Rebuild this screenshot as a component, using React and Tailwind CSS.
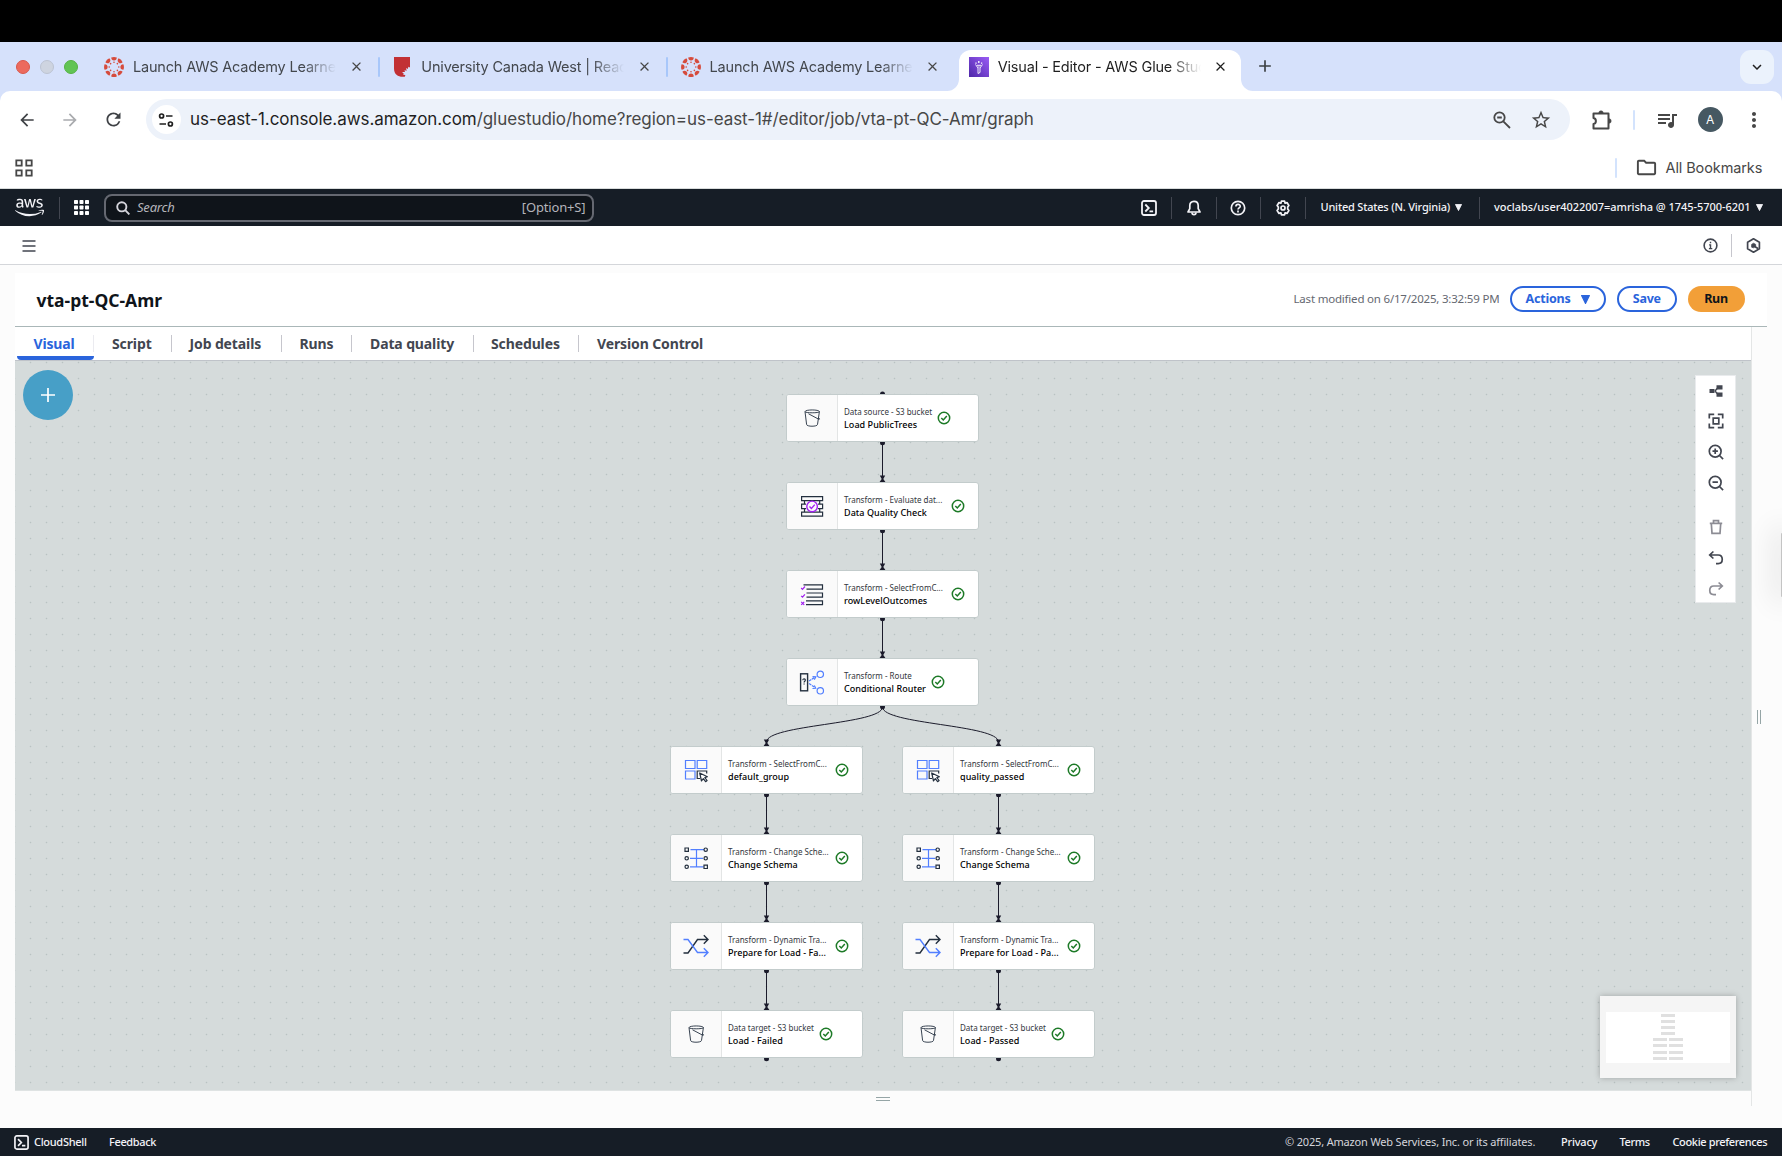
import { FaAws } from "react-icons/fa";
import {
  MdArrowBack,
  MdArrowForward,
  MdRefresh,
  MdStarOutline,
  MdQueueMusic,
  MdMoreVert,
  MdAdd,
  MdExpandMore,
  MdOutlineFolder,
  MdClose,
} from "react-icons/md";

/* ---------- browser chrome ---------- */

function CanvasFavicon() {
  const spokes = [0, 45, 90, 135, 180, 225, 270, 315];
  return (
    <svg viewBox="0 0 20 20" className="size-5 shrink-0">
      {spokes.map((a) => (
        <g key={a} transform={`rotate(${a} 10 10)`} fill="#d64b3c">
          <path d="M7.2 .6 Q10 -.5 12.8 .6 Q12.6 3.6 10 3.6 Q7.4 3.6 7.2 .6Z" />
          <circle cx="10" cy="5.2" r=".8" />
        </g>
      ))}
    </svg>
  );
}

function ShieldFavicon() {
  return (
    <svg viewBox="0 0 20 20" className="size-5 shrink-0">
      <path
        d="M2 0h16v10.500l-1.600-.8-.6 2.300-1.700-1 .5 3-2-1.100.3 2-2.900.2 1.700 1.400-.5 1.200 2.200.3-.6 1.700C7 20.500 2 18 2 11.500Z"
        fill="#c23034"
      />
    </svg>
  );
}

function GlueFavicon() {
  return (
    <svg viewBox="0 0 20 20" className="size-5 shrink-0">
      <defs>
        <linearGradient id="glue" x1="0" y1="1" x2="1" y2="0">
          <stop offset="0" stopColor="#4d27a8" />
          <stop offset="1" stopColor="#9a5cf5" />
        </linearGradient>
      </defs>
      <rect width="20" height="20" fill="url(#glue)" />
      <g fill="none" stroke="#fff" strokeWidth=".9">
        <path d="M6.500 7.500 9 11v5.500l2-1V11l2.500-3.500M8 8.300h4" />
        <path d="M7 6.800V5.400M9.800 6V4M12.600 6.800V5.400M9.900 9.500v1" strokeWidth="1.300" />
      </g>
    </svg>
  );
}

function Tab({ icon, title, active, divider }) {
  return (
    <div
      className={
        active
          ? "relative ml-[1.300px] flex h-[41px] w-[281.500px] items-center rounded-t-xl bg-white pl-[9.500px] before:absolute before:bottom-0 before:-left-3 before:size-3 before:rounded-br-xl before:shadow-[4px_4px_0_3px_#fff] after:absolute after:-right-3 after:bottom-0 after:size-3 after:rounded-bl-xl after:shadow-[-4px_4px_0_3px_#fff]"
          : "flex h-[41px] w-[288.300px] items-center pl-[11px]"
      }
    >
      <div className="flex -translate-y-1 items-center">
        {icon}
        <span
          className={
            "ml-[9px] w-[203px] overflow-hidden text-[14.500px] tracking-[-0.18px] whitespace-nowrap [mask-image:linear-gradient(to_right,#000_84%,transparent)] " +
            (active ? "text-[#1f1f1f]" : "text-[#43474d]")
          }
        >
          {title}
        </span>
        <MdClose className={"ml-[12.500px] size-[15px] " + (active ? "text-[#1f1f1f]" : "text-[#474747]")} />
        {divider && <span className="ml-[14.500px] h-5 w-[2px] rounded bg-[#a8c7fa]" />}
      </div>
    </div>
  );
}

function TabStrip() {
  return (
    <div className="flex h-[49px] items-end bg-[#d6e1fb]">
      <div className="mb-[17px] ml-[15.500px] flex w-[77.500px] gap-[9.700px]">
        <span className="size-[14.500px] rounded-full border border-[#d9574b] bg-[#ec6a5e]" />
        <span className="size-[14.500px] rounded-full border border-[#bcc3d2] bg-[#ced4e0]" />
        <span className="size-[14.500px] rounded-full border border-[#56b244] bg-[#61c454]" />
      </div>
      <Tab icon={<CanvasFavicon />} title="Launch AWS Academy Learner" divider />
      <Tab icon={<ShieldFavicon />} title="University Canada West | Reading" divider />
      <Tab icon={<CanvasFavicon />} title="Launch AWS Academy Learner" />
      <Tab icon={<GlueFavicon />} title="Visual - Editor - AWS Glue Studio" active />
      <MdAdd className="mb-[15px] ml-[14px] size-[20px] text-[#3c4043]" />
      <div className="mr-2 mb-[7px] ml-auto flex h-[34px] w-[34px] items-center justify-center rounded-[11px] bg-[#ebf2fc]">
        <MdExpandMore className="size-[18px] text-[#1f1f1f]" />
      </div>
    </div>
  );
}

function AddressBar() {
  return (
    <div className="bg-[#d6e1fb]">
      <div className="flex h-[57px] items-center rounded-t-[10px] bg-white text-[#474747]">
        <MdArrowBack className="ml-[17px] size-5 text-[#3f4246]" />
        <MdArrowForward className="ml-[23px] size-5 text-[#a9abae]" />
        <MdRefresh className="ml-[23px] size-[21px] text-[#3f4246]" />
        <div className="ml-[21.500px] flex h-[41.500px] w-[1424px] items-center rounded-full bg-[#edf2fa] pl-[6px]">
          <span className="flex size-[29px] items-center justify-center rounded-full bg-white">
            <svg viewBox="0 0 16 16" className="size-4" fill="none" stroke="#1f1f1f" strokeWidth="1.700">
              <circle cx="3.600" cy="4" r="2" />
              <path d="M8 4h6.500M1.500 12H8" />
              <circle cx="12.400" cy="12" r="2" />
            </svg>
          </span>
          <span className="ml-[9.500px] text-[17px] tracking-[-0.064px] whitespace-nowrap text-[#474747]">
            <span className="text-[#1f1f1f]">us-east-1.console.aws.amazon.com</span>
            /gluestudio/home?region=us-east-1#/editor/job/vta-pt-QC-Amr/graph
          </span>
          <svg viewBox="0 0 18 18" className="ml-auto size-[18px]" fill="none" stroke="#474747" strokeWidth="1.800">
            <circle cx="6.500" cy="6.500" r="5.200" />
            <path d="M10.300 10.300 17 17M4.200 6.500h4.600" />
          </svg>
          <MdStarOutline className="mr-[18px] ml-[19px] size-[22px]" />
        </div>
        <svg viewBox="0 0 22 22" className="ml-[21.500px] size-[22px]" fill="none" stroke="#474747" strokeWidth="2" strokeLinejoin="round">
          <path d="M2.500 4.500h15v15h-15v-4.400c3.200-.6 3.200-5.600 0-6.200Z" />
          <path d="M7.800 4a2.200 2.200 0 0 1 4.400 0ZM18 9.800a2.200 2.200 0 0 1 0 4.400Z" fill="#474747" strokeWidth=".6" />
        </svg>
        <span className="ml-[20px] h-5 w-[2px] rounded bg-[#d3e3fd]" />
        <MdQueueMusic className="ml-[20px] size-[24px]" />
        <span className="ml-[19px] flex size-[24.500px] items-center justify-center rounded-full bg-[#465862] text-[12px] text-white">A</span>
        <MdMoreVert className="ml-[19px] size-6" />
      </div>
    </div>
  );
}

function BookmarksBar() {
  return (
    <div className="flex h-[41px] items-center border-b border-[#d9dcdc] bg-white pb-[1px]">
      <svg viewBox="0 0 18 18" className="ml-[15px] size-[18px]" fill="none" stroke="#474747" strokeWidth="1.800">
        <path d="M1.300 1.300h5.400v5.400H1.300ZM11.300 1.300h5.400v5.400h-5.400ZM1.300 11.300h5.400v5.400H1.300ZM11.300 11.300h5.400v5.400h-5.400Z" />
      </svg>
      <div className="ml-auto flex items-center">
        <span className="h-5 w-[2px] rounded bg-[#d3e3fd]" />
        <MdOutlineFolder className="ml-[18px] size-[23px] text-[#474747]" />
        <span className="ml-[8px] w-[97px] text-[14.500px] tracking-[-0.1px] whitespace-nowrap text-[#474747]">All Bookmarks</span>
      </div>
      <span className="w-[19.500px]" />
    </div>
  );
}

/* ---------- AWS navigation ---------- */

function Divider({ className }) {
  return <span className={"h-[22px] w-px shrink-0 bg-[#424650] " + className} />;
}

function ShellIcon({ className }) {
  return (
    <svg viewBox="0 0 16 16" className={className} fill="none" stroke="currentColor" strokeWidth="1.800">
      <rect x="1" y="1" width="14" height="14" rx="2" />
      <path d="M4.300 4.500 7.800 8l-3.500 3.500M8.500 11.300h3.600" />
    </svg>
  );
}

function AwsHeader() {
  return (
    <div className="flex h-[37px] items-center bg-[#161d26] font-['Noto_Sans',sans-serif] text-[11px] font-medium text-[#f3f3f7]">
      <FaAws className="ml-[15px] size-[29px] shrink-0" />
      <Divider className="ml-[15px]" />
      <svg viewBox="0 0 15 15" className="ml-[14px] size-[15px]" fill="#fff">
        {[0, 5.5, 11].map((y) => [0, 5.5, 11].map((x) => <rect key={x + "-" + y} x={x} y={y} width="4" height="4" rx=".7" />))}
      </svg>
      <div className="ml-[15px] flex h-[28px] w-[490px] items-center rounded-lg border-2 border-[#656871] bg-[#0f141a] text-[13px] font-normal text-[#b4b4bb]">
        <svg viewBox="0 0 14 14" className="ml-[9.500px] size-[14px]" fill="none" stroke="#d5d5dc" strokeWidth="1.900">
          <circle cx="5.800" cy="5.800" r="4.600" />
          <path d="m9.200 9.200 4.200 4.200" />
        </svg>
        <span className="ml-[7.500px] tracking-[-0.2px] italic">Search</span>
        <span className="mr-[6.500px] ml-auto tracking-[-0.15px]">[Option+S]</span>
      </div>
      <ShellIcon className="ml-[546.500px] size-[16px]" />
      <Divider className="ml-[14px]" />
      <svg viewBox="0 0 16 16" className="ml-[14px] size-4" fill="none" stroke="currentColor" strokeWidth="1.700">
        <path d="M8 1.300c-3 0-4.200 2-4.200 4.300v3L2 12h12l-1.800-3.400v-3C12.200 3.300 11 1.300 8 1.300Z" strokeLinejoin="round" />
        <path d="M6 12.500c0 2.800 4 2.800 4 0" />
      </svg>
      <Divider className="ml-[14px]" />
      <svg viewBox="0 0 16 16" className="ml-[13.500px] size-4" fill="none" stroke="currentColor" strokeWidth="1.700">
        <circle cx="8" cy="8" r="6.700" />
        <path d="M5.900 6.600C5.900 3.600 10.300 3.800 10.200 6.400 10.100 7.900 8 7.900 8 9.600M8 10.600v1.800" />
      </svg>
      <Divider className="ml-[14px]" />
      <svg viewBox="0 0 16 16" className="ml-[14px] size-4" fill="none" stroke="currentColor" strokeWidth="1.700" strokeLinejoin="round">
        <path d="M6.400 1.200h3.200l.5 2 1.900-.6 1.900 2.800L12.700 7v2l1.200 1.600-1.900 2.800-1.900-.6-.5 2H6.400l-.5-2-1.900.6-1.900-2.800L3.300 9V7L2.100 5.400 4 2.600l1.900.6Z" />
        <circle cx="8" cy="8" r="2" />
      </svg>
      <Divider className="ml-[14px]" />
      <span className="ml-[14.500px] w-[134.500px] tracking-[-0.2px] whitespace-nowrap">United States (N. Virginia)</span>
      <Caret />
      <Divider className="ml-[16.500px]" />
      <span className="ml-[14.500px] w-[261.500px] tracking-[-0.04px] whitespace-nowrap">voclabs/user4022007=amrisha @ 1745-5700-6201</span>
      <Caret />
    </div>
  );
}

function Caret({ className = "h-[7px] w-[7px]" }) {
  return (
    <svg viewBox="0 0 8 8" className={className} fill="currentColor">
      <path d="M.5.500h7L4 7.500Z" stroke="currentColor" strokeLinejoin="round" />
    </svg>
  );
}

function ServiceBar() {
  return (
    <div className="flex h-[39px] items-center border-b border-[#d4d6da] bg-white pt-px">
      <svg viewBox="0 0 14 12" className="ml-[21.500px] h-3 w-[14px]" stroke="#424650" strokeWidth="1.700">
        <path d="M.5 1h13M.5 6h13M.5 11h13" />
      </svg>
      <svg viewBox="0 0 16 16" className="ml-auto size-[15px]" fill="none" stroke="#424650" strokeWidth="1.700">
        <circle cx="8" cy="8" r="6.800" />
        <path d="M6.500 7.300H8v4M6.300 11.300h3.600M8 4v1.700" strokeWidth="1.500" />
      </svg>
      <span className="ml-[12.500px] h-[23px] w-px bg-[#c6c6cd]" />
      <svg viewBox="0 0 16 16" className="mr-[21.500px] ml-[14px] size-[15px]" fill="none" stroke="#424650" strokeWidth="1.800" strokeLinejoin="round">
        <path d="M8 .9 14.300 4.500v7L8 15.100 1.700 11.500v-7Z" />
        <path d="m8.500 8.500 4.600 3" />
        <path d="M6 9.800V6.800L8 5.600l2.300 1.200v2L8 10.400Z" fill="#424650" strokeWidth=".8" />
      </svg>
    </div>
  );
}

function JobHeader() {
  return (
    <div className="flex h-[54px] w-[1751.500px] items-center border-b border-[#aab7b8] bg-white pr-[22px] pb-px pl-[21.500px]">
      <h1 className="pt-[3px] text-[17.500px] font-bold tracking-[0px] text-[#0f141a]">vta-pt-QC-Amr</h1>
      <span className="ml-auto w-[216px] text-[11.500px] tracking-[-0.2px] whitespace-nowrap text-[#656871]">
        Last modified on 6/17/2025, 3:32:59 PM
      </span>
      <button className="flex h-[26px] w-[96px] items-center justify-center gap-[10px] rounded-full border-2 border-[#2a64dc] text-[12.500px] font-bold tracking-[-0.2px] text-[#2a64dc]">
        Actions
        <Caret className="size-[9px]" />
      </button>
      <button className="ml-[11px] h-[26px] w-[60.500px] rounded-full border-2 border-[#2a64dc] text-[12.500px] leading-none font-bold tracking-[-0.3px] text-[#2a64dc]">Save</button>
      <button className="ml-[10.500px] h-[26px] w-[57px] rounded-full bg-[#f29f38] text-[12.500px] leading-none font-bold tracking-[-0.3px] text-[#0f141a]">Run</button>
    </div>
  );
}

function EditorTabs() {
  const tab = "flex h-[33px] items-center text-[14px] font-bold tracking-[-0.12px] whitespace-nowrap text-[#424650]";
  const sep = <span className="h-[17px] w-px shrink-0 bg-[#c6c6cd]" />;
  return (
    <nav className="flex h-[34px] items-center border-b border-[#bfc3c9] bg-white">
      <span className="ml-[1.500px] flex h-[33px] w-[77px] items-center justify-center rounded-b-sm border-b-4 border-[#2a64dc] pt-[4px] pr-[2px] text-[14px] font-bold tracking-[-0.14px] text-[#2a64dc]">
        Visual
      </span>
      <span className="-ml-px h-[17px] w-px bg-[#ebebf0]" />
      <span className={tab + " ml-[18.500px] w-[58.500px]"}>Script</span>
      {sep}
      <span className={tab + " ml-[18px] w-[91.500px]"}>Job details</span>
      {sep}
      <span className={tab + " ml-[17.500px] w-[51.500px]"}>Runs</span>
      {sep}
      <span className={tab + " ml-[18px] w-[102.500px]"}>Data quality</span>
      {sep}
      <span className={tab + " ml-[17.500px] w-[87px]"}>Schedules</span>
      {sep}
      <span className={tab + " ml-[18px]"}>Version Control</span>
    </nav>
  );
}

/* ---------- node glyphs ---------- */

const NAVY = "#232f3e";
const BLUE = "#527fff";
const PURPLE = "#a020f0";

function Glyph({ kind }) {
  const p = { viewBox: "0 0 26 26", className: "size-[26px]", fill: "none", strokeWidth: 1.2 };
  if (kind === "bucket")
    return (
      <svg {...p} stroke={NAVY} strokeWidth=".9">
        <path d="M6 6.600C6 4.400 20.400 4.400 20.400 6.600 20.400 8.200 6 8.200 6 6.600L7.600 19.500c.2 2.300 10.600 2.300 10.900 0L20.400 6.600M9.500 8.800l9.800 5.200c1.600.6 1.800-.2.200-1.100" />
      </svg>
    );
  if (kind === "quality")
    return (
      <svg {...p} stroke={NAVY}>
        <path d="M2.600 3.600h21v4h-21ZM7 11.200H2.600v4.400H7M19 11.200h4.600v4.400H19M2.600 19.200h21v4h-21ZM5.500 7.600v3.600M20.700 7.600v3.600M5.500 15.600v3.600M20.700 15.600v3.600" />
        <circle cx="13.100" cy="13.400" r="5.300" fill="#fafafa" stroke={PURPLE} strokeWidth="1.400" />
        <path d="m10.500 13.500 1.900 1.900 3.400-3.800" stroke={PURPLE} strokeWidth="1.400" />
      </svg>
    );
  if (kind === "rows")
    return (
      <svg {...p} stroke={NAVY}>
        <path d="M4.500 3.800h19v4.400H7.500M7.500 12h16v4.200h-16M7 19.800h16.500v3.800H7" />
        <path d="m2.200 7 1.300 1.400 2.400-2.900M2.200 14.800l1.300 1.400 2.400-2.900M2.200 20.800l3 3M5.200 20.800l-3 3" stroke={PURPLE} strokeWidth="1.200" />
      </svg>
    );
  if (kind === "router")
    return (
      <svg {...p} stroke={BLUE} strokeWidth="1.200">
        <rect x="1.600" y="4.800" width="7" height="17" stroke={NAVY} strokeWidth="1.400" />
        <path d="M3.800 11.200c.1-1.900 2.700-1.700 2.500.1 0 .9-1.200.9-1.200 2.100M5.100 14.400v1.200" stroke={NAVY} strokeWidth="1.200" />
        <path d="m10 12 6-3.800M10 14.500l6 4" strokeDasharray="2.800 .7" />
        <path d="m13.500 7.600 3.300.1-1.500 2.900M13.500 19.500l3.200-.2-1.400-2.900" />
        <circle cx="21.300" cy="5.300" r="3.200" />
        <circle cx="21.300" cy="21.800" r="3.200" />
      </svg>
    );
  if (kind === "select")
    return (
      <svg {...p} stroke={BLUE}>
        <path d="M2.500 3.500h9.500v8H2.500ZM14.200 3.500h9.500v8h-9.500ZM2.500 14h9.500v8H2.500Z" />
        <path d="M17 21.500h-2.800V14h9.500v2.500" stroke={NAVY} />
        <path d="m16.700 16 1.800 8 1.800-2.300 2.300 3 1.500-1.200-2.300-2.900 2.600-.9Z" stroke={NAVY} fill="#fff" strokeLinejoin="round" />
      </svg>
    );
  if (kind === "schema")
    return (
      <svg {...p} stroke={BLUE}>
        <path d="M7.500 4.700H21M7 13.300h13M7 21.800h13.500M13.500 4.700v17" />
        <g stroke={NAVY} fill="#fafafa">
          <path d="M2 3h3.400v3.400H2ZM21 20.100h3.400v3.400H21Z" />
          <circle cx="22.700" cy="4.700" r="1.700" />
          <circle cx="3.700" cy="13.300" r="1.700" />
          <circle cx="22.700" cy="13.300" r="1.700" />
          <circle cx="3.700" cy="21.800" r="1.700" />
        </g>
      </svg>
    );
  return (
    <svg {...p} strokeWidth="1.400">
      <path d="M.5 20H5L14.500 6.500H25M20.800 2.300 25 6.500l-4.200 4.200" stroke={NAVY} />
      <path d="M.5 6.500H5L14.500 19.500H25M20.800 15.300l4.200 4.200-4.200 4.200" stroke={BLUE} />
    </svg>
  );
}

/* ---------- graph ---------- */

const nodes = [
  { x: 772, y: 34, kind: "bucket", type: "Data source - S3 bucket", name: "Load PublicTrees", fit: true },
  { x: 772, y: 122, kind: "quality", type: "Transform - Evaluate dat...", name: "Data Quality Check" },
  { x: 772, y: 210, kind: "rows", type: "Transform - SelectFromC...", name: "rowLevelOutcomes" },
  { x: 772, y: 298, kind: "router", type: "Transform - Route", name: "Conditional Router", fit: true },
  { x: 656, y: 386, kind: "select", type: "Transform - SelectFromC...", name: "default_group" },
  { x: 656, y: 474, kind: "schema", type: "Transform - Change Sche...", name: "Change Schema" },
  { x: 656, y: 562, kind: "shuffle", type: "Transform - Dynamic Tra...", name: "Prepare for Load - Fa..." },
  { x: 656, y: 650, kind: "bucket", type: "Data target - S3 bucket", name: "Load - Failed", fit: true },
  { x: 888, y: 386, kind: "select", type: "Transform - SelectFromC...", name: "quality_passed" },
  { x: 888, y: 474, kind: "schema", type: "Transform - Change Sche...", name: "Change Schema" },
  { x: 888, y: 562, kind: "shuffle", type: "Transform - Dynamic Tra...", name: "Prepare for Load - Pa..." },
  { x: 888, y: 650, kind: "bucket", type: "Data target - S3 bucket", name: "Load - Passed", fit: true },
];

function Node({ node }) {
  return (
    <div
      className="absolute flex h-[48px] w-[193px] overflow-hidden rounded-[3px] border border-[#c3cccc] bg-white"
      style={{ left: node.x - 1, top: node.y - 1 }}
    >
      <div className="flex w-[51px] shrink-0 items-center justify-center border-r border-[#e3e5e5] bg-[#fafafa]">
        <Glyph kind={node.kind} />
      </div>
      <div className={node.fit ? "ml-[6px] self-center whitespace-nowrap" : "ml-[6px] w-[101.500px] self-center whitespace-nowrap"}>
        <div className="text-[8px] leading-[13px] text-[#33373d]">{node.type}</div>
        <div className="text-[9px] leading-[14px] font-medium tracking-[0.05px] text-black">{node.name}</div>
      </div>
      <svg viewBox="0 0 14 14" className="mt-[16px] ml-[5px] size-[14px] shrink-0" fill="none" stroke="#1d7a27" strokeWidth="1.500">
        <circle cx="7" cy="7" r="5.700" />
        <path d="m4.300 7 2 2 3.500-4" />
      </svg>
    </div>
  );
}

const DOT = "#1b1b2b";

function Port({ x, y }) {
  return <circle cx={x} cy={y} r="2.500" fill={DOT} />;
}

function ArrowHead({ x, y }) {
  return <path d={`M${x - 2.7} ${y - 6.5}h5.400l-1.900 3.500 2.100 3h-5.800l2.100-3Z`} fill={DOT} />;
}

function Edges() {
  const links = [
    [867.5, 34], [867.5, 122], [867.5, 210],
    [751.5, 386], [751.5, 474], [751.5, 562],
    [983.5, 386], [983.5, 474], [983.5, 562],
  ];
  return (
    <svg className="absolute inset-0 h-full w-full" fill="none" stroke={DOT} strokeWidth="1">
      {links.map(([x, y]) => <path key={x + "-" + y} d={`M${x} ${y + 47}V${y + 86}`} />)}
      <path d="M867.500 346C867.500 363.500 751.500 363.500 751.500 381M867.500 346C867.500 363.500 983.500 363.500 983.500 381" />
      <g stroke="none">
        {links.map(([x, y]) => <ArrowHead key={x + "-" + y} x={x} y={y + 87} />)}
        <ArrowHead x={751.5} y={385} />
        <ArrowHead x={983.5} y={385} />
        <Port x={867.5} y={33} />
        {nodes.map((n) => <Port key={n.x + "-" + n.y} x={n.x + 95.5} y={n.y + 47.7} />)}
      </g>
    </svg>
  );
}

function ToolIcon({ children, muted }) {
  return (
    <svg viewBox="0 0 16 16" className="size-4" fill="none" stroke={muted ? "#8c8c94" : "#424650"} strokeWidth="1.700">
      {children}
    </svg>
  );
}

function GraphTools() {
  return (
    <div className="absolute top-[13.500px] right-[15px] flex h-[228px] w-[41px] flex-col items-center gap-[14.700px] border border-[#e9ebed] bg-white pt-[7px]">
      <ToolIcon>
        <path d="M7 8 10.500 4M7 8l3.500 4" strokeWidth="1.400" />
        <path d="M1.500 6h5v4h-5ZM8.500 2.200h6v4.300h-6ZM8.500 9.500h6v4.300h-6Z" fill="#424650" stroke="none" />
      </ToolIcon>
      <ToolIcon>
        <path d="M1.300 5.500V1.300h4.900M9.800 1.300h4.900v4.200M14.700 10.500v4.200H9.800M6.200 14.700H1.300v-4.200M5.200 5.200h5.600v5.600H5.200Z" />
      </ToolIcon>
      <ToolIcon>
        <circle cx="7.200" cy="7.200" r="5.900" />
        <path d="m11.500 11.500 3.600 3.600M4.500 7.200h5.400M7.200 4.500v5.400" />
      </ToolIcon>
      <ToolIcon>
        <circle cx="7.200" cy="7.200" r="5.900" />
        <path d="m11.500 11.500 3.600 3.600M4.500 7.200h5.400" />
      </ToolIcon>
      <div className="mt-[14px] flex flex-col gap-[14.700px]">
        <ToolIcon muted>
          <path d="M3.300 4.500 4 14.300h8l.7-9.800M1.800 4.300h12.400M5.500 4V1.700h5V4" />
        </ToolIcon>
        <ToolIcon>
          <path d="M5.400 1.500 1.700 5l3.700 3.500M2 5h8.200c5.400 0 5.400 8.700 0 8.700H8" />
        </ToolIcon>
        <ToolIcon muted>
          <path d="M10.600 1.500 14.300 5l-3.700 3.500M14 5H5.800c-5.400 0-5.400 8.700 0 8.700H8" />
        </ToolIcon>
      </div>
    </div>
  );
}

function MiniMap() {
  return (
    <div className="absolute right-[15px] bottom-[12.500px] h-[82px] w-[136px] bg-[#f5f5f5] px-[6px] pt-[16px] shadow-[0_0_6px_rgba(0,0,0,0.25)]">
      <div className="flex h-[51px] flex-col items-center gap-[3.200px] bg-white pt-[2px]">
        {[0, 1, 2, 3].map((i) => <span key={i} className="h-[3px] w-[14px] shrink-0 bg-[#e0e0e0]" />)}
        {[0, 1, 2, 3].map((i) => (
          <span key={i} className="flex shrink-0 gap-[2.500px]">
            <span className="h-[3px] w-[14px] bg-[#e0e0e0]" />
            <span className="h-[3px] w-[14px] bg-[#e0e0e0]" />
          </span>
        ))}
      </div>
    </div>
  );
}

function Graph() {
  return (
    <div className="relative h-[730px] overflow-hidden border-b border-[#dfe3e3] bg-[#d5dbdb] bg-[radial-gradient(circle_at_7.500px_7.500px,#b9c2c2_0.6px,transparent_1.100px)] bg-[size:16px_16px] bg-[position:8px_-6px]">
      <button className="absolute top-[9px] left-[8px] flex size-[50px] items-center justify-center rounded-full bg-[#479fc7]">
        <svg viewBox="0 0 14 14" className="size-[14px]" stroke="#fff" strokeWidth="1.700">
          <path d="M7 0v14M0 7h14" />
        </svg>
      </button>
      <Edges />
      {nodes.map((n) => <Node key={n.x + "-" + n.y} node={n} />)}
      <GraphTools />
      <MiniMap />
    </div>
  );
}

function Footer() {
  const t = "whitespace-nowrap";
  return (
    <div className="flex h-[28px] items-center bg-[#161d26] pt-px text-[11px] font-medium tracking-[-0.36px] text-[#f3f3f7]">
      <ShellIcon className="ml-[14px] size-[15px]" />
      <span className={t + " ml-[5px] w-[75px] tracking-[-0.3px]"}>CloudShell</span>
      <span className={t}>Feedback</span>
      <span className={t + " ml-auto w-[276px] font-normal tracking-[-0.17px] text-[#d5d5dc]"}>© 2025, Amazon Web Services, Inc. or its affiliates.</span>
      <span className={t + " w-[58.500px] tracking-[-0.2px]"}>Privacy</span>
      <span className={t + " w-[53px]"}>Terms</span>
      <span className={t + " w-[109.500px]"}>Cookie preferences</span>
    </div>
  );
}

export default function App() {
  return (
    <div className="flex h-[1156px] w-[1782px] flex-col overflow-hidden bg-black pt-[42px] font-['Inter','Liberation_Sans',sans-serif]">
      <TabStrip />
      <AddressBar />
      <BookmarksBar />
      <AwsHeader />
      <ServiceBar />
      <div className="flex flex-1 flex-col font-['Noto_Sans',sans-serif]">
        <div className="relative flex-1 bg-[#fcfcfc] pt-[8px] pl-[15px]">
          <JobHeader />
          <div className="flex">
            <main className="h-[779px] w-[1737px] border-r border-[#e4e6e6]">
              <EditorTabs />
              <Graph />
              <div className="flex h-[15px] flex-col items-center gap-[2px] pt-[6px]">
                <span className="h-px w-[14px] bg-[#95a5a6]" />
                <span className="h-px w-[14px] bg-[#95a5a6]" />
              </div>
            </main>
            <div className="flex h-[779px] w-[13px] items-center justify-center gap-[2px]">
              <span className="h-[14px] w-px bg-[#95a5a6]" />
              <span className="h-[14px] w-px bg-[#95a5a6]" />
            </div>
          </div>
          <div className="absolute top-[268px] right-0 h-[64px] w-px rounded-l bg-[#c4c4c4] shadow-[0_0_28px_6px_rgba(0,0,0,0.12)]" />
        </div>
        <Footer />
      </div>
    </div>
  );
}
